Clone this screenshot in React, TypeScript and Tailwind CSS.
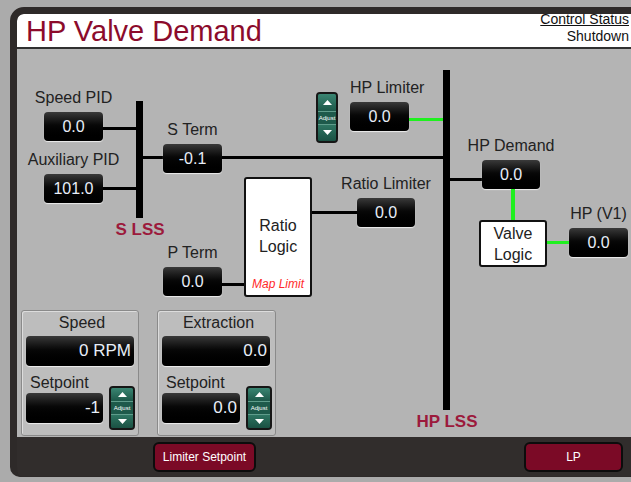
import React from "react";

function ValueBox({ className, text, right }: { className: string; text: string; right?: boolean }) {
  return (
    <div
      className={`flex items-center rounded-[4px] bg-gradient-to-b from-[#3a3a3a] via-[#080808] via-45% to-black text-[#e8eef8] shadow-[0_1px_1px_rgba(255,255,255,0.75)] ${
        right ? "justify-end pr-[3px] text-[17px]" : "justify-center text-[16px]"
      } ${className}`}
    >
      {text}
    </div>
  );
}

// label sitting above a value box; the pair is one node of the diagram
function Node({ className, label, value, w, start }: { className: string; label: string; value: string; w: string; start?: boolean }) {
  return (
    <div className={`absolute flex flex-col gap-[6px] ${start ? "items-start" : "items-center"} ${className}`}>
      <div className="whitespace-nowrap text-[16px] leading-[16px] text-[#222]">{label}</div>
      <ValueBox className={`h-[29px] ${w}`} text={value} />
    </div>
  );
}

function Adjust({ className }: { className: string }) {
  return (
    <div className={`flex flex-col overflow-hidden rounded-[4px] border-2 border-[#161616] bg-[#1e5a4b] ${className}`}>
      <div className="flex flex-1 items-center justify-center bg-gradient-to-b from-[#3a8572] to-[#1d5849]">
        <svg width="9" height="5" viewBox="0 0 9 5">
          <path d="M0 5 L4.5 0 L9 5 Z" fill="#fff" />
        </svg>
      </div>
      <div className="flex items-center justify-center border-y border-[#5f9c8b] py-[3px] text-[6px] leading-none text-white">
        Adjust
      </div>
      <div className="flex flex-1 items-center justify-center bg-gradient-to-b from-[#2e7562] to-[#1a5143]">
        <svg width="9" height="5" viewBox="0 0 9 5">
          <path d="M0 0 L4.5 5 L9 0 Z" fill="#fff" />
        </svg>
      </div>
    </div>
  );
}

function Panel({ title, value, setpoint, wide }: { title: string; value: string; setpoint: string; wide?: boolean }) {
  return (
    <div
      className={`flex h-[126px] flex-col rounded-[3px] border border-[#8a8a8a] bg-[#bdbdbd] pl-[4px] pt-[3px] shadow-[inset_1px_1px_0_#dcdcdc] ${
        wide ? "w-[119px]" : "w-[118px]"
      }`}
    >
      <div className="h-[18px] text-center text-[16px] leading-[18px] text-[#222]">{title}</div>
      <ValueBox className="mt-[4px] h-[30px] w-[108px]" text={value} right />
      <div className="mt-[8px] flex gap-[6px]">
        <div className="flex flex-col">
          <div className="h-[18px] pl-[4px] text-[16px] leading-[18px] text-[#222]">Setpoint</div>
          <ValueBox className={`mt-[1px] h-[30px] ${wide ? "w-[78px]" : "w-[77px]"}`} text={setpoint} right />
        </div>
        <Adjust className="mt-[12px] h-[44px] w-[26px]" />
      </div>
    </div>
  );
}

export default function App() {
  return (
    <div className="h-[482px] w-[631px] overflow-hidden bg-[#ababab] pl-[10px] pt-[7px] font-['Liberation_Sans',Arial,sans-serif]">
      <div className="flex h-[470px] w-[640px] flex-col overflow-hidden rounded-tl-[14px] rounded-bl-[10px] border-[7px] border-b-[1px] border-[#2e2a29] bg-[#2e2a29]">
        {/* Header */}
        <header className="flex h-[35px] shrink-0 items-center justify-between rounded-tl-[6px] border-b-2 border-[#303030] bg-white pl-[9px] pr-[14px]">
          <h1 className="pt-[1px] text-[29px] leading-none text-[#8c0b2b]">HP Valve Demand</h1>
          <div className="-mt-[3px] self-start text-right text-[14px] leading-[17px] text-[#111]">
            <div className="underline">Control Status</div>
            <div>Shutdown</div>
          </div>
        </header>

        {/* Diagram */}
        <main className="relative flex h-[388px] shrink-0 items-end gap-[18px] bg-[#b4b4b4] pb-[1px] pl-[4px]">
          <Node className="left-[27px] top-[41px] w-[59px]" label="Speed PID" value="0.0" w="w-[59px]" />
          <Node className="left-[27px] top-[103px] w-[59px]" label="Auxiliary PID" value="101.0" w="w-[59px]" />

          {/* S LSS */}
          <div className="absolute left-[86px] top-[78px] h-[3px] w-[33px] bg-black" />
          <div className="absolute left-[86px] top-[138px] h-[3px] w-[33px] bg-black" />
          <div className="absolute left-[119px] top-[52px] h-[117px] w-[7px] bg-black" />
          <div className="absolute left-[126px] top-[107px] h-[3px] w-[20px] bg-black" />
          <div className="absolute left-[123px] top-[180px] -translate-x-1/2 -translate-y-1/2 whitespace-nowrap text-[17px] font-bold leading-none text-[#9c1a3c]">
            S LSS
          </div>

          <Node className="left-[146px] top-[73px] w-[59px]" label="S Term" value="-0.1" w="w-[59px]" />
          <div className="absolute left-[205px] top-[107px] h-[3px] w-[221px] bg-black" />

          {/* HP LSS */}
          <div className="absolute left-[426px] top-[21px] h-[340px] w-[7px] bg-black" />
          <div className="absolute left-[430px] top-[372px] -translate-x-1/2 -translate-y-1/2 whitespace-nowrap text-[17px] font-bold leading-none text-[#9c1a3c]">
            HP LSS
          </div>

          <Adjust className="absolute left-[299px] top-[43px] h-[51px] w-[22px]" />
          <Node className="left-[333px] top-[31px] w-[59px]" label="HP Limiter" value="0.0" w="w-[59px]" start />
          <div className="absolute left-[392px] top-[69px] h-[3px] w-[34px] bg-[#1ff01f]" />

          <div className="absolute left-[227px] top-[128px] flex h-[120px] w-[68px] flex-col items-center rounded-[3px] border-2 border-[#111] bg-white pt-[36px] text-[16px] leading-[21px] text-[#222]">
            <div>Ratio</div>
            <div>Logic</div>
            <div className="mt-auto pb-[5px] text-[12px] italic leading-none text-[#ff2a2a]">Map Limit</div>
          </div>
          <Node className="left-[340px] top-[127px] w-[58px]" label="Ratio Limiter" value="0.0" w="w-[58px]" />
          <div className="absolute left-[295px] top-[162px] h-[3px] w-[45px] bg-black" />

          <Node className="left-[146px] top-[196px] w-[59px]" label="P Term" value="0.0" w="w-[59px]" />
          <div className="absolute left-[205px] top-[234px] h-[3px] w-[22px] bg-black" />

          <div className="absolute left-[433px] top-[129px] h-[3px] w-[32px] bg-black" />
          <Node className="left-[465px] top-[89px] w-[58px]" label="HP Demand" value="0.0" w="w-[58px]" />
          <div className="absolute left-[494px] top-[140px] h-[31px] w-[4px] bg-[#1ff01f]" />

          <div className="absolute left-[462px] top-[171px] flex h-[47px] w-[68px] flex-col items-center justify-center rounded-[3px] border-2 border-[#111] bg-white text-[16px] leading-[21px] text-[#222]">
            <div>Valve</div>
            <div>Logic</div>
          </div>
          <div className="absolute left-[530px] top-[192px] h-[3px] w-[22px] bg-[#1ff01f]" />
          <Node className="left-[552px] top-[157px] w-[59px]" label="HP (V1)" value="0.0" w="w-[59px]" />

          <Panel title="Speed" value="0 RPM" setpoint="-1" />
          <Panel title="Extraction" value="0.0" setpoint="0.0" wide />
        </main>

        {/* Bottom bar */}
        <footer className="flex h-[39px] shrink-0 items-center bg-[#312d2c] pl-[136px]">
          <button
            type="button"
            className="h-[30px] w-[103px] rounded-[6px] border-2 border-[#0c0c0c] bg-[#7b0a26] text-[12px] text-white"
          >
            Limiter Setpoint
          </button>
          <button
            type="button"
            className="ml-[268px] h-[30px] w-[99px] rounded-[6px] border-2 border-[#0c0c0c] bg-[#7b0a26] text-[12px] text-white"
          >
            LP
          </button>
        </footer>
      </div>
    </div>
  );
}
